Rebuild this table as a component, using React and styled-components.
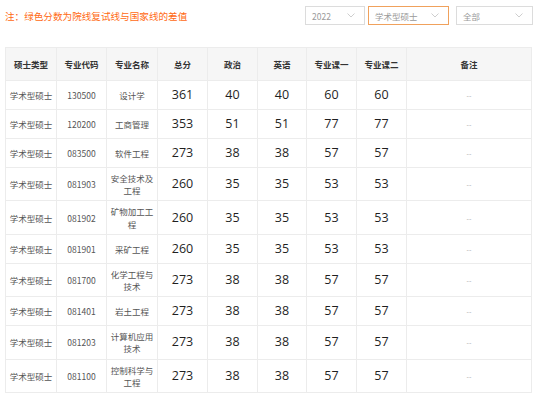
import styled, { createGlobalStyle } from 'styled-components';

const GlobalStyle = createGlobalStyle`
  body {
    margin: 0;
    background: #fff;
    font-family: "Noto Sans CJK SC", "Noto Sans", sans-serif;
  }
`;

const rows = [
  ['130500', '设计学', 361, 40, 40, 60, 60],
  ['120200', '工商管理', 353, 51, 51, 77, 77],
  ['083500', '软件工程', 273, 38, 38, 57, 57],
  ['081903', '安全技术及工程', 260, 35, 35, 53, 53],
  ['081902', '矿物加工工程', 260, 35, 35, 53, 53],
  ['081901', '采矿工程', 260, 35, 35, 53, 53],
  ['081700', '化学工程与技术', 273, 38, 38, 57, 57],
  ['081401', '岩土工程', 273, 38, 38, 57, 57],
  ['081203', '计算机应用技术', 273, 38, 38, 57, 57],
  ['081100', '控制科学与工程', 273, 38, 38, 57, 57],
];

const headers = ['硕士类型', '专业代码', '专业名称', '总分', '政治', '英语', '专业课一', '专业课二', '备注'];
const widths = [51, 50, 51, 50, 50, 49, 50, 50, 125];

const Chevron = () => (
  <svg width="8" height="5" viewBox="0 0 8 5">
    <path d="M0.5 0.5 L4 4 L7.5 0.5" fill="none" stroke="#c8c8c8" strokeWidth="0.9" />
  </svg>
);

const App = () => {
  return (
    <Page>
      <GlobalStyle />
      <TopBar>
        <Note>注：绿色分数为院线复试线与国家线的差值</Note>
        <Filters>
          <Select width={60}>
            <span>2022</span>
            <Chevron />
          </Select>
          <Select width={81} active gap={3}>
            <span>学术型硕士</span>
            <Chevron />
          </Select>
          <Select width={77} gap={7}>
            <span>全部</span>
            <Chevron />
          </Select>
        </Filters>
      </TopBar>
      <Table>
        <colgroup>
          {widths.map((w, i) => (
            <col key={i} style={{ width: w }} />
          ))}
        </colgroup>
        <thead>
          <tr>
            {headers.map((h) => (
              <Th key={h}>{h}</Th>
            ))}
          </tr>
        </thead>
        <tbody>
          {rows.map((r) => (
            <tr key={r[0]}>
              <Td>学术型硕士</Td>
              <Td>{r[0]}</Td>
              <Td>{r[1]}</Td>
              {r.slice(2).map((n, i) => (
                <Num key={i}>{n}</Num>
              ))}
              <Remark>--</Remark>
            </tr>
          ))}
        </tbody>
      </Table>
    </Page>
  );
};

const Page = styled.div`
  width: 538px;
  padding: 6px 5px 0 5px;
  box-sizing: border-box;
`;

const TopBar = styled.div`
  display: flex;
  align-items: center;
  justify-content: space-between;
  height: 19px;
`;

const Note = styled.span`
  font-size: 9.6px;
  color: #ff6a13;
`;

const Filters = styled.div`
  display: flex;
  align-items: center;
`;

const Select = styled.div`
  width: ${(p) => p.width}px;
  height: 19px;
  margin-left: ${(p) => p.gap || 0}px;
  box-sizing: border-box;
  border: 1px solid ${(p) => (p.active ? '#f0a15c' : '#dcdcdc')};
  display: flex;
  align-items: center;
  justify-content: space-between;
  padding: 0 9px 0 6px;
  font-size: 8.5px;
  color: #9a9a9a;
`;

const Table = styled.table`
  margin-top: 22px;
  width: 526px;
  table-layout: fixed;
  border-collapse: collapse;
  border: 1px solid #ececec;
  text-align: center;
`;

const Th = styled.th`
  height: 32px;
  padding: 0 2px;
  background: #f6f6f6;
  border: 1px solid #ececec;
  font-size: 8.5px;
  font-weight: bold;
  color: #333;
`;

const Td = styled.td`
  height: 29px;
  padding: 4px 2px;
  box-sizing: border-box;
  border: 1px solid #ececec;
  font-size: 8.5px;
  line-height: 12.2px;
  color: #555;
`;

const Num = styled(Td)`
  font-family: "Open Sans", "Noto Sans", sans-serif;
  font-size: 12.5px;
  color: #1f1f1f;
`;

const Remark = styled(Td)`
  color: #aaa;
  font-size: 7px;
`;

export default App;
